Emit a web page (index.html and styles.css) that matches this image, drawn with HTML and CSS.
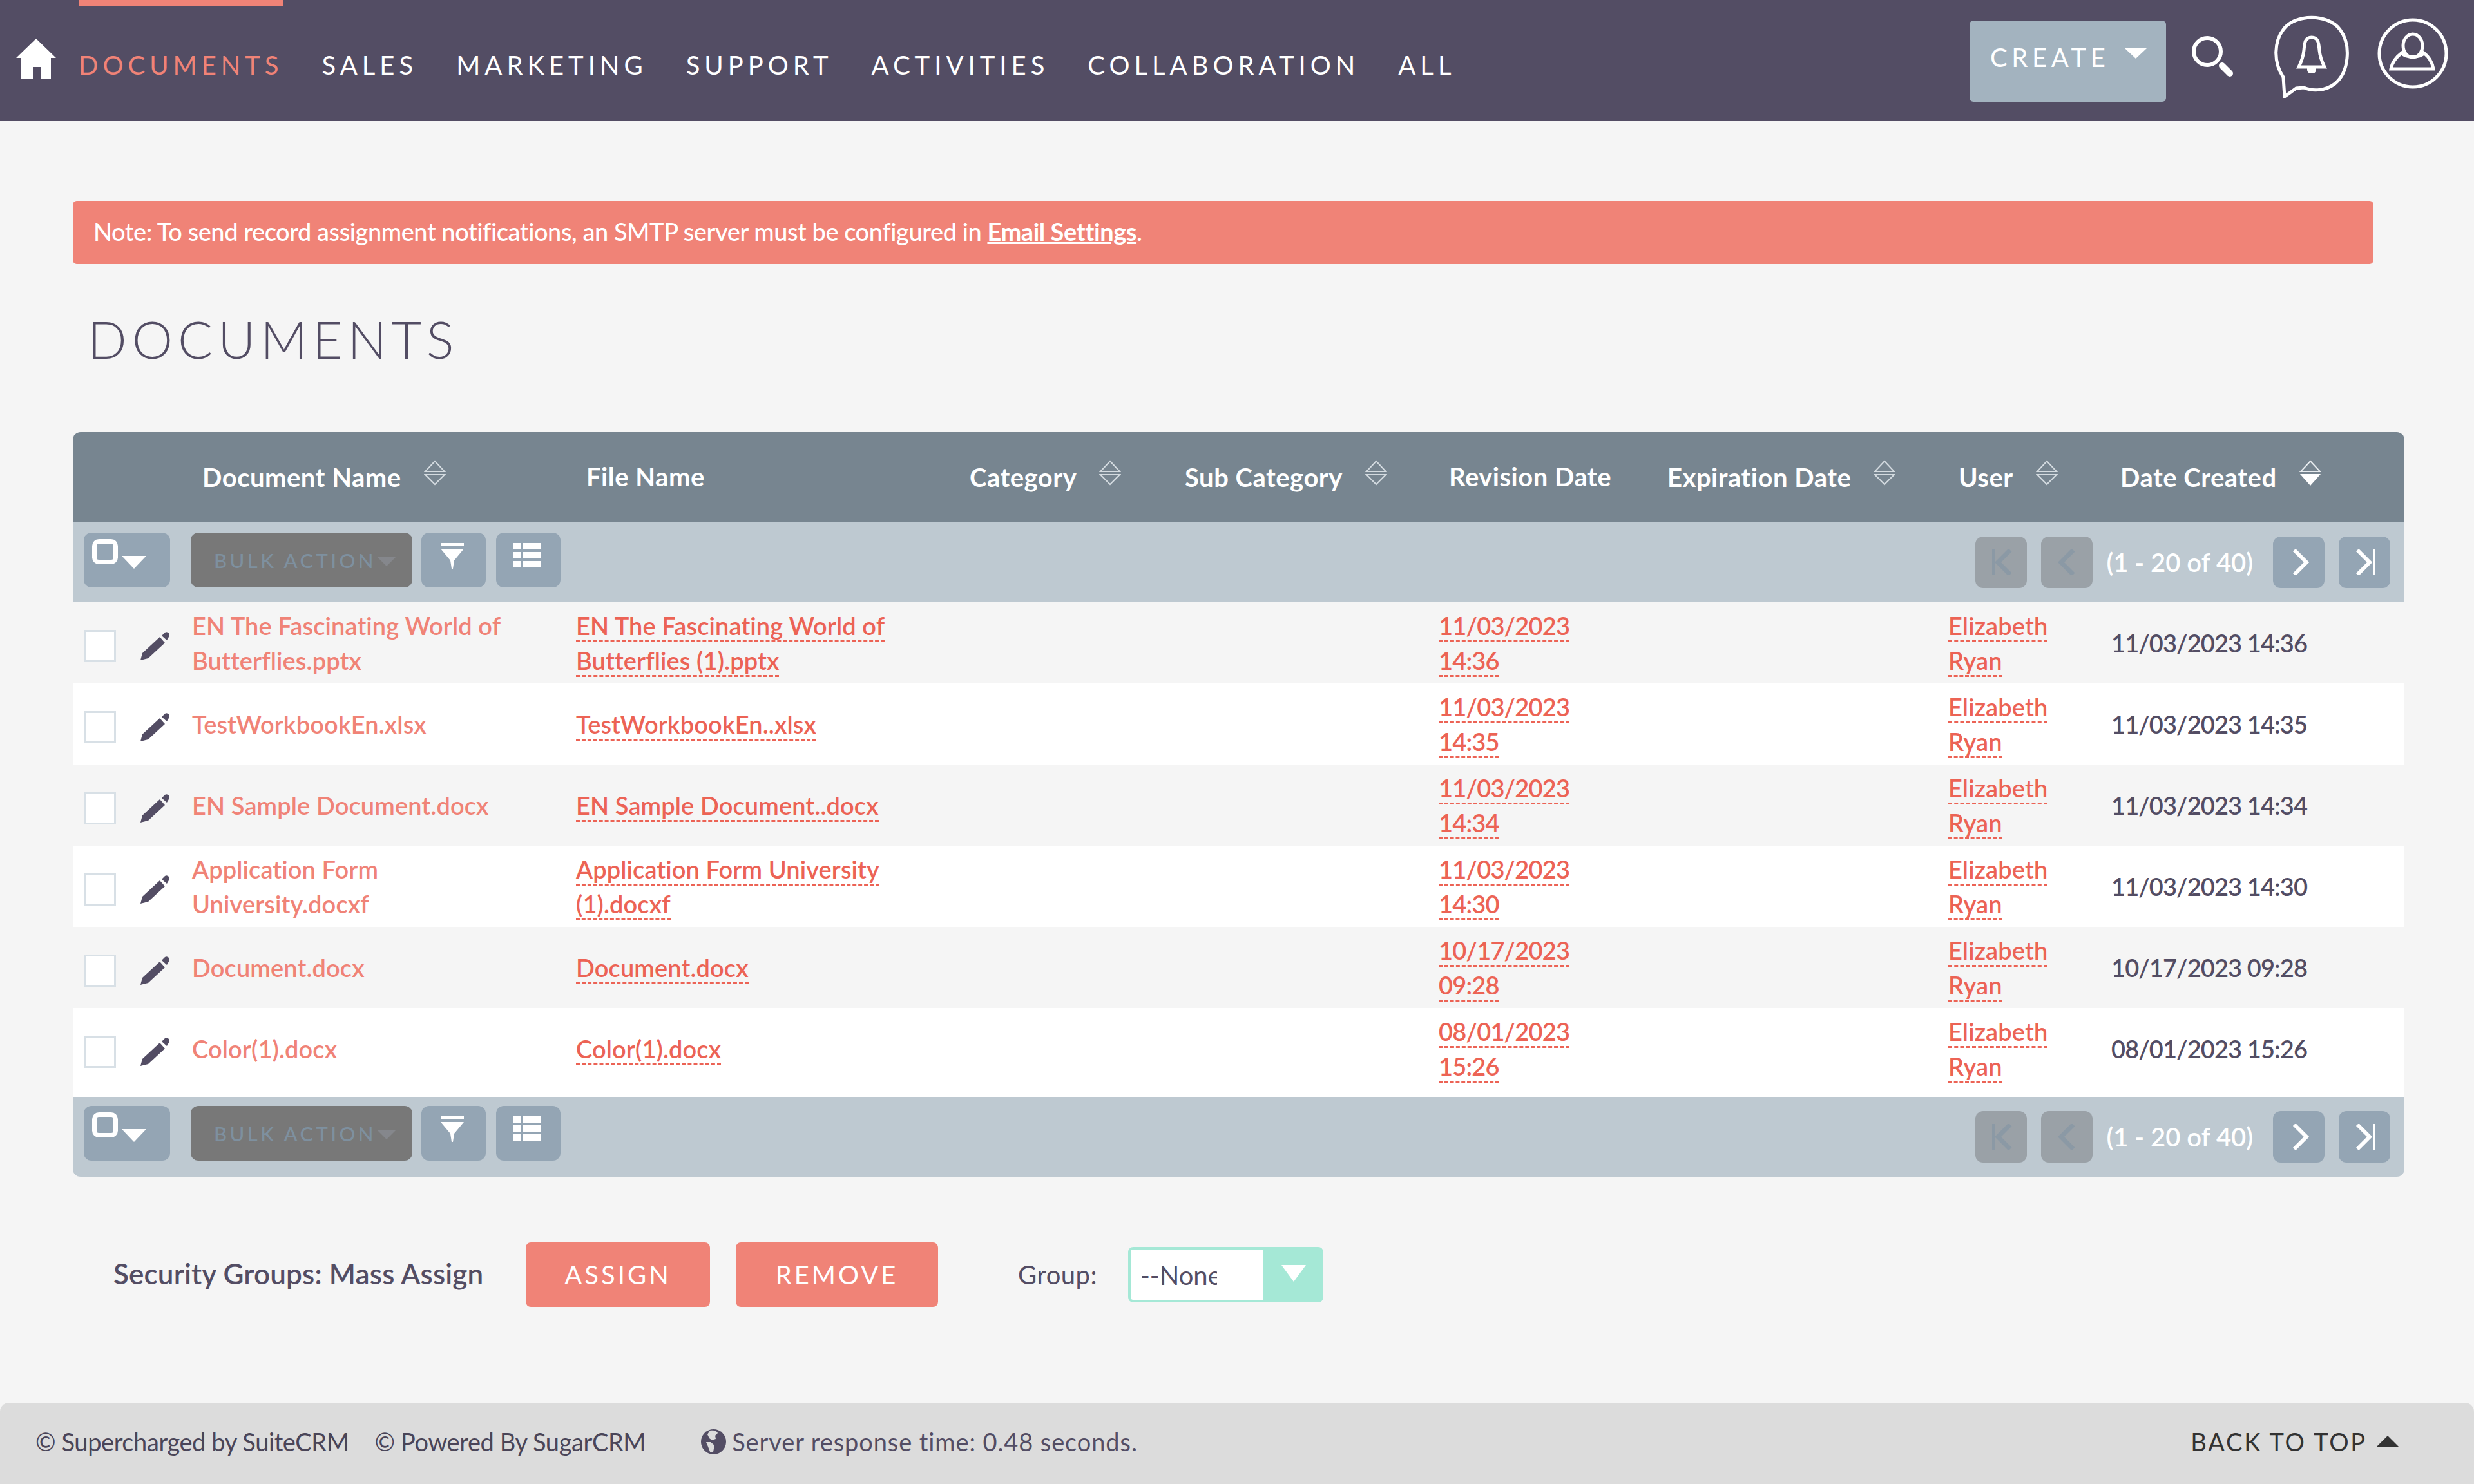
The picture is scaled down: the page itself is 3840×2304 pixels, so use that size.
FILE: index.html
```html
<!DOCTYPE html>
<html lang="en">
<head>
  <meta charset="UTF-8">
  <meta name="viewport" content="width=device-width, initial-scale=1.0">
  <title>Documents - SuiteCRM</title>
  <link rel="stylesheet" href="styles.css">
</head>
<body>
  <svg class="defs" width="0" height="0" aria-hidden="true">
    <symbol id="pencil" viewBox="0 0 45 44">
      <path d="M0 44 L3 33 L30 8 L38 17 L12 41 Z" fill="#534d64"/>
      <path d="M33 6 L38 1 Q41 -1 44 2 L45 6 L41 13 Z" fill="#534d64"/>
    </symbol>
    <symbol id="sort" viewBox="0 0 34 40">
      <path d="M17 2 L32 18 H2 Z M2 23 H32 L17 38 Z" fill="none" stroke="#d4dbe0" stroke-width="2"/>
    </symbol>
    <symbol id="sort-down" viewBox="0 0 34 40">
      <path d="M17 2 L32 18 H2 Z" fill="none" stroke="#e8ecef" stroke-width="2"/>
      <path d="M1 22 H33 L17 40 Z" fill="#fff"/>
    </symbol>
    <symbol id="select-all" viewBox="0 0 84 46">
      <rect x="3.5" y="3.5" width="33" height="32" rx="7" fill="none" stroke="#fff" stroke-width="7"/>
      <path d="M46 26 H84 L65 46 Z" fill="#fff"/>
    </symbol>
    <symbol id="filter" viewBox="0 0 36 40">
      <path d="M0 0 H36 V5 H0 Z M0 9 H36 L21 27 L19 40 H17 L15 27 Z" fill="#fff"/>
    </symbol>
    <symbol id="list" viewBox="0 0 42 38">
      <path d="M0 0 H12 V10 H0 Z M15 0 H42 V10 H15 Z M0 14 H12 V24 H0 Z M15 14 H42 V24 H15 Z M0 28 H12 V38 H0 Z M15 28 H42 V38 H15 Z" fill="#fff"/>
    </symbol>
    <symbol id="page-first" viewBox="0 0 40 40">
      <path d="M6 0 H10 V40 H6 Z" fill="#8b99a5"/>
      <path d="M34 1 L15 20 L34 39" fill="none" stroke="#8b99a5" stroke-width="7"/>
    </symbol>
    <symbol id="page-prev" viewBox="0 0 40 40">
      <path d="M30 1 L11 20 L30 39" fill="none" stroke="#8b99a5" stroke-width="7"/>
    </symbol>
    <symbol id="page-next" viewBox="0 0 40 40">
      <path d="M10 1 L29 20 L10 39" fill="none" stroke="#fff" stroke-width="6"/>
    </symbol>
    <symbol id="page-last" viewBox="0 0 40 40">
      <path d="M6 1 L25 20 L6 39" fill="none" stroke="#fff" stroke-width="6"/>
      <path d="M30 0 H34 V40 H30 Z" fill="#fff"/>
    </symbol>
  </svg>

  <header class="topbar">
    <a class="home" href="#">
      <svg width="62" height="62" viewBox="0 0 62 62"><path d="M31 0 L62 30 H54 V62 H39 V44 H26 V62 H8 V30 H0 Z" fill="#fff"/></svg>
    </a>
    <nav class="main-nav">
      <a class="active" href="#">DOCUMENTS</a>
      <a href="#">SALES</a>
      <a href="#">MARKETING</a>
      <a href="#">SUPPORT</a>
      <a href="#">ACTIVITIES</a>
      <a href="#">COLLABORATION</a>
      <a href="#">ALL</a>
    </nav>
    <div class="nav-tools">
      <button class="create-btn">CREATE<svg width="34" height="16" viewBox="0 0 34 16"><path d="M0 0 H34 L17 16 Z" fill="#fff"/></svg></button>
      <svg class="tool-search" width="66" height="64" viewBox="0 0 66 64">
        <circle cx="24" cy="24" r="21" fill="none" stroke="#fff" stroke-width="6"/>
        <path d="M47 46 L59 58" stroke="#fff" stroke-width="10" stroke-linecap="round"/>
      </svg>
      <svg class="tool-bell" width="116" height="128" viewBox="0 0 116 128">
        <path d="M14 96 C-2 72 0 40 14 22 C32 -3 84 -3 102 22 C120 46 116 88 94 106 C80 117 60 118 46 112 L34 113 L16 126 Z" fill="none" stroke="#fff" stroke-width="5"/>
        <path d="M58 34 C47 34 47 44 46 54 C45 64 42 72 38 80 H78 C74 72 71 64 70 54 C69 44 69 34 58 34 Z" fill="none" stroke="#fff" stroke-width="5"/>
        <path d="M51 80 H65 V84 C65 89 61 90 58 90 C55 90 51 89 51 84 Z" fill="#fff"/>
      </svg>
      <svg class="tool-user" width="110" height="110" viewBox="0 0 110 110">
        <circle cx="55" cy="55" r="52" fill="none" stroke="#fff" stroke-width="5"/>
        <ellipse cx="55" cy="43" rx="15" ry="18" fill="none" stroke="#fff" stroke-width="5"/>
        <path d="M38 54 C40 62 70 62 72 54 C80 60 85 68 87 79 H21 C23 68 30 60 38 54 Z" fill="none" stroke="#fff" stroke-width="5"/>
      </svg>
    </div>
  </header>

  <main>
    <div class="alert">Note: To send record assignment notifications, an SMTP server must be configured in <a href="#">Email Settings</a>.</div>
    <h1 class="page-title">DOCUMENTS</h1>

    <div class="list-wrap">
      <table class="list-table">
        <colgroup>
          <col class="c-check"><col class="c-edit"><col class="c-name"><col class="c-file"><col class="c-cat"><col class="c-sub"><col class="c-rev"><col class="c-exp"><col class="c-user"><col class="c-date">
        </colgroup>
        <thead>
          <tr>
            <th colspan="2"></th>
            <th>Document Name<svg class="sort"><use href="#sort"/></svg></th>
            <th>File Name</th>
            <th>Category<svg class="sort"><use href="#sort"/></svg></th>
            <th>Sub Category<svg class="sort"><use href="#sort"/></svg></th>
            <th>Revision Date</th>
            <th>Expiration Date<svg class="sort"><use href="#sort"/></svg></th>
            <th>User<svg class="sort"><use href="#sort"/></svg></th>
            <th>Date Created<svg class="sort"><use href="#sort-down"/></svg></th>
          </tr>
          <tr class="toolbar-row">
            <td colspan="10">
              <div class="toolbar">
                <button class="tb-btn tb-select"><svg width="84" height="46"><use href="#select-all"/></svg></button>
                <button class="tb-btn tb-bulk">BULK ACTION<svg width="28" height="14" viewBox="0 0 28 14"><path d="M0 0 H28 L14 14 Z" fill="#85878c"/></svg></button>
                <button class="tb-btn tb-icon"><svg width="36" height="40"><use href="#filter"/></svg></button>
                <button class="tb-btn tb-icon"><svg width="42" height="38"><use href="#list"/></svg></button>
                <div class="pager">
                  <button class="pg-btn off"><svg width="40" height="40"><use href="#page-first"/></svg></button>
                  <button class="pg-btn off"><svg width="40" height="40"><use href="#page-prev"/></svg></button>
                  <span class="pg-count">(1 - 20 of 40)</span>
                  <button class="pg-btn"><svg width="40" height="40"><use href="#page-next"/></svg></button>
                  <button class="pg-btn"><svg width="40" height="40"><use href="#page-last"/></svg></button>
                </div>
              </div>
            </td>
          </tr>
        </thead>
        <tbody>
          <tr>
            <td class="cell-check"><span class="checkbox"></span></td>
            <td class="cell-edit"><svg width="45" height="44"><use href="#pencil"/></svg></td>
            <td class="cell-name"><a class="name" href="#">EN The Fascinating World of Butterflies.pptx</a></td>
            <td><a class="link" href="#">EN The Fascinating World of Butterflies (1).pptx</a></td>
            <td></td><td></td>
            <td class="cell-rev"><a class="link" href="#">11/03/2023 14:36</a></td>
            <td></td>
            <td class="cell-user"><a class="link" href="#">Elizabeth Ryan</a></td>
            <td class="date">11/03/2023 14:36</td>
          </tr>
          <tr>
            <td class="cell-check"><span class="checkbox"></span></td>
            <td class="cell-edit"><svg width="45" height="44"><use href="#pencil"/></svg></td>
            <td class="cell-name"><a class="name" href="#">TestWorkbookEn.xlsx</a></td>
            <td><a class="link" href="#">TestWorkbookEn..xlsx</a></td>
            <td></td><td></td>
            <td class="cell-rev"><a class="link" href="#">11/03/2023 14:35</a></td>
            <td></td>
            <td class="cell-user"><a class="link" href="#">Elizabeth Ryan</a></td>
            <td class="date">11/03/2023 14:35</td>
          </tr>
          <tr>
            <td class="cell-check"><span class="checkbox"></span></td>
            <td class="cell-edit"><svg width="45" height="44"><use href="#pencil"/></svg></td>
            <td class="cell-name"><a class="name" href="#">EN Sample Document.docx</a></td>
            <td><a class="link" href="#">EN Sample Document..docx</a></td>
            <td></td><td></td>
            <td class="cell-rev"><a class="link" href="#">11/03/2023 14:34</a></td>
            <td></td>
            <td class="cell-user"><a class="link" href="#">Elizabeth Ryan</a></td>
            <td class="date">11/03/2023 14:34</td>
          </tr>
          <tr>
            <td class="cell-check"><span class="checkbox"></span></td>
            <td class="cell-edit"><svg width="45" height="44"><use href="#pencil"/></svg></td>
            <td class="cell-name"><a class="name" href="#">Application Form University.docxf</a></td>
            <td><a class="link" href="#">Application Form University (1).docxf</a></td>
            <td></td><td></td>
            <td class="cell-rev"><a class="link" href="#">11/03/2023 14:30</a></td>
            <td></td>
            <td class="cell-user"><a class="link" href="#">Elizabeth Ryan</a></td>
            <td class="date">11/03/2023 14:30</td>
          </tr>
          <tr>
            <td class="cell-check"><span class="checkbox"></span></td>
            <td class="cell-edit"><svg width="45" height="44"><use href="#pencil"/></svg></td>
            <td class="cell-name"><a class="name" href="#">Document.docx</a></td>
            <td><a class="link" href="#">Document.docx</a></td>
            <td></td><td></td>
            <td class="cell-rev"><a class="link" href="#">10/17/2023 09:28</a></td>
            <td></td>
            <td class="cell-user"><a class="link" href="#">Elizabeth Ryan</a></td>
            <td class="date">10/17/2023 09:28</td>
          </tr>
          <tr class="last-row">
            <td class="cell-check"><span class="checkbox"></span></td>
            <td class="cell-edit"><svg width="45" height="44"><use href="#pencil"/></svg></td>
            <td class="cell-name"><a class="name" href="#">Color(1).docx</a></td>
            <td><a class="link" href="#">Color(1).docx</a></td>
            <td></td><td></td>
            <td class="cell-rev"><a class="link" href="#">08/01/2023 15:26</a></td>
            <td></td>
            <td class="cell-user"><a class="link" href="#">Elizabeth Ryan</a></td>
            <td class="date">08/01/2023 15:26</td>
          </tr>
        </tbody>
        <tfoot>
          <tr class="toolbar-row">
            <td colspan="10">
              <div class="toolbar toolbar-bottom">
                <button class="tb-btn tb-select"><svg width="84" height="46"><use href="#select-all"/></svg></button>
                <button class="tb-btn tb-bulk">BULK ACTION<svg width="28" height="14" viewBox="0 0 28 14"><path d="M0 0 H28 L14 14 Z" fill="#85878c"/></svg></button>
                <button class="tb-btn tb-icon"><svg width="36" height="40"><use href="#filter"/></svg></button>
                <button class="tb-btn tb-icon"><svg width="42" height="38"><use href="#list"/></svg></button>
                <div class="pager">
                  <button class="pg-btn off"><svg width="40" height="40"><use href="#page-first"/></svg></button>
                  <button class="pg-btn off"><svg width="40" height="40"><use href="#page-prev"/></svg></button>
                  <span class="pg-count">(1 - 20 of 40)</span>
                  <button class="pg-btn"><svg width="40" height="40"><use href="#page-next"/></svg></button>
                  <button class="pg-btn"><svg width="40" height="40"><use href="#page-last"/></svg></button>
                </div>
              </div>
            </td>
          </tr>
        </tfoot>
      </table>
    </div>

    <div class="mass-assign">
      <span class="mass-title">Security Groups: Mass Assign</span>
      <button class="btn-red btn-assign">ASSIGN</button>
      <button class="btn-red btn-remove">REMOVE</button>
      <label class="group-label">Group:</label>
      <div class="group-select">
        <span class="group-value">--None--</span>
        <span class="group-arrow"><svg width="38" height="26" viewBox="0 0 38 26"><path d="M0 0 H38 L19 26 Z" fill="#fff"/></svg></span>
      </div>
    </div>
  </main>

  <footer class="page-footer">
    <span class="foot-item">&copy; Supercharged by SuiteCRM</span>
    <span class="foot-item foot-powered">&copy; Powered By SugarCRM</span>
    <svg class="globe" width="39" height="39" viewBox="0 0 39 39">
      <circle cx="19.5" cy="19.5" r="19.5" fill="#534d64"/>
      <path d="M14 2 C20 1 25 3 26 6 L22 10 L23 15 L17 17 L13 14 L10 8 Z M8 20 L15 20 L21 25 L19 35 L14 35 L11 27 Z" fill="#dcdcdc"/>
    </svg>
    <span class="foot-time">Server response time: 0.48 seconds.</span>
    <a class="back-top" href="#">BACK TO TOP<svg width="36" height="18" viewBox="0 0 36 18"><path d="M18 0 L36 18 H0 Z" fill="#333"/></svg></a>
  </footer>
</body>
</html>
```

FILE: styles.css
```css
body {
  font-family: Lato, "Open Sans", sans-serif;
  font-size: 38px;
  background: #f5f5f5;
  color: #534d64;
  margin: 0;
  padding: 0;
  min-height: 2304px;
  display: flex;
  flex-direction: column;
}
a {
  text-decoration: none;
}
button {
  font-family: inherit;
  border: none;
  padding: 0;
}
.defs {
  position: absolute;
}

/* top bar */
.topbar {
  background: #534d64;
  height: 188px;
  display: flex;
  align-items: flex-start;
  padding: 0 40px 0 25px;
}
.home {
  margin: 60px 35px 0 0;
  display: block;
  height: 62px;
}
.main-nav {
  display: flex;
  gap: 60px;
}
.main-nav a {
  border-top: 9px solid transparent;
  padding-top: 72px;
  line-height: 40px;
  font-size: 40px;
  letter-spacing: 7px;
  color: #fff;
}
.main-nav a.active {
  color: #f08377;
  border-top-color: #f08377;
}
.nav-tools {
  margin-left: auto;
  display: flex;
  align-items: flex-start;
}
.create-btn {
  width: 305px;
  height: 126px;
  margin-top: 32px;
  background: #a3b3bf;
  border-radius: 6px;
  color: #fff;
  font-size: 40px;
  letter-spacing: 6.6px;
  display: flex;
  align-items: flex-start;
  padding: 33px 0 0 32px;
}
.create-btn svg {
  margin: 10px 0 0 24px;
}
.tool-search {
  margin: 56px 0 0 40px;
}
.tool-bell {
  margin: 24px 0 0 62px;
}
.tool-user {
  margin: 28px 0 0 44px;
}

/* alert + title */
.alert {
  margin: 124px 156px 0 113px;
  height: 98px;
  line-height: 94px;
  padding-left: 32px;
  background: #f08377;
  border-radius: 6px;
  color: #fff;
  font-size: 38px;
  font-weight: 500;
  letter-spacing: -0.45px;
}
.alert a {
  color: #fff;
  font-weight: bold;
  text-decoration: underline;
}
.page-title {
  margin: 64px 0 93px 136px;
  height: 104px;
  line-height: 104px;
  font-size: 80px;
  font-weight: 300;
  letter-spacing: 8px;
}

/* list table */
.list-wrap {
  margin: 0 108px 0 113px;
  border-radius: 12px;
  overflow: hidden;
}
.list-table {
  width: 100%;
  table-layout: fixed;
  border-collapse: collapse;
}
.c-check { width: 88px; }
.c-edit { width: 97px; }
.c-name { width: 596px; }
.c-file { width: 595px; }
.c-cat { width: 334px; }
.c-sub { width: 410px; }
.c-rev { width: 339px; }
.c-exp { width: 452px; }
.c-user { width: 251px; }
.c-date { width: 457px; }

.list-table th {
  background: #778590;
  height: 140px;
  box-sizing: border-box;
  padding: 0 0 3px 16px;
  text-align: left;
  color: #fff;
  font-size: 40px;
  font-weight: bold;
  letter-spacing: 0.5px;
  white-space: nowrap;
}
.sort {
  width: 34px;
  height: 40px;
  margin-left: 35px;
  vertical-align: 2px;
}
.toolbar-row td {
  background: #bec9d1;
  height: 124px;
  padding: 0;
}
.toolbar {
  height: 124px;
  box-sizing: border-box;
  display: flex;
  align-items: flex-start;
  padding: 16px 22px 0 17px;
}
.toolbar-bottom {
  padding-top: 14px;
}
.toolbar-bottom .pager {
  margin-top: 8px;
}
.tb-btn {
  height: 85px;
  background: #94a5b4;
  border-radius: 12px;
  color: #fff;
  display: flex;
  align-items: flex-start;
  justify-content: center;
}
.tb-select {
  width: 134px;
  padding: 10px 0 0 13px;
  justify-content: flex-start;
}
.tb-bulk {
  width: 344px;
  margin: 0 14px 0 32px;
  background: #787878;
  color: #7e909f;
  font-size: 31px;
  letter-spacing: 4.4px;
  font-weight: 500;
  align-items: center;
  justify-content: flex-start;
  padding-left: 36px;
}
.tb-bulk svg {
  margin: 4px 0 0 2px;
}
.tb-icon {
  width: 100px;
  padding: 16px 5px 0 0;
}
.tb-icon + .tb-icon {
  margin-left: 16px;
}
.pager {
  margin: 6px 0 0 auto;
  display: flex;
  align-items: flex-start;
}
.pg-btn {
  width: 80px;
  height: 80px;
  background: #94a5b4;
  border-radius: 12px;
  display: flex;
  align-items: center;
  justify-content: center;
  padding-left: 6px;
}
.pg-btn + .pg-btn {
  margin-left: 22px;
}
.pg-btn.off {
  background: #9aa1a7;
  padding-left: 0;
}
.pg-count {
  margin: 0 31px 0 22px;
  line-height: 80px;
  color: #fff;
  font-size: 40px;
  font-weight: 600;
  white-space: nowrap;
  letter-spacing: -0.05px;
}

.list-table tbody tr {
  background: #f5f5f5;
}
.list-table tbody tr:nth-child(even) {
  background: #fff;
}
.list-table tbody td {
  height: 126px;
  box-sizing: border-box;
  padding: 0 16px 0 0;
  line-height: 54px;
  vertical-align: middle;
  font-size: 38px;
  font-weight: 600;
  letter-spacing: 0.1px;
}
.list-table tbody .last-row td {
  height: 138px;
  padding-bottom: 12px;
}
.list-table tbody .cell-check,
.list-table tbody .cell-edit {
  padding-top: 10px;
  padding-left: 17px;
}
.list-table tbody .last-row .cell-check,
.list-table tbody .last-row .cell-edit {
  padding-top: 10px;
  padding-bottom: 12px;
}
.cell-edit svg {
  display: block;
}
.checkbox {
  display: block;
  width: 50px;
  height: 50px;
  box-sizing: border-box;
  background: #fff;
  border: 3px solid #d8e0e6;
}
.name {
  color: #f08377;
}
.link {
  color: #ec6355;
  border-bottom: 3px dashed #ec6355;
}
.list-table tbody .cell-name {
  padding-right: 40px;
}
.list-table tbody .cell-rev {
  padding-right: 40px;
  letter-spacing: -0.8px;
}
.list-table tbody .cell-user {
  padding-right: 30px;
}
.list-table tbody .date {
  white-space: nowrap;
  padding-left: 2px;
  letter-spacing: -0.9px;
}

/* mass assign */
.mass-assign {
  margin-top: 102px;
  padding-left: 176px;
  display: flex;
  align-items: center;
  height: 100px;
}
.mass-title {
  font-size: 44px;
  font-weight: 600;
  letter-spacing: 0.15px;
  width: 640px;
  white-space: nowrap;
  padding-bottom: 4px;
}
.btn-red {
  height: 100px;
  background: #f08377;
  border-radius: 8px;
  color: #fff;
  font-size: 40px;
  letter-spacing: 4px;
}
.btn-assign {
  width: 286px;
}
.btn-remove {
  width: 314px;
  margin-left: 40px;
}
.group-label {
  margin-left: 124px;
  width: 171px;
  font-size: 40px;
  letter-spacing: 0.5px;
}
.group-select {
  width: 303px;
  height: 86px;
  box-sizing: border-box;
  display: flex;
  background: #fff;
  border: 4px solid #a5e8d6;
  border-radius: 8px;
}
.group-value {
  width: 119px;
  margin-left: 15px;
  overflow: hidden;
  white-space: nowrap;
  line-height: 80px;
  font-size: 40px;
  color: #534d64;
}
.group-arrow {
  margin-left: auto;
  width: 90px;
  background: #a5e8d6;
  display: flex;
  justify-content: center;
  padding: 24px 0 0 5px;
  box-sizing: border-box;
}
.group-arrow svg {
  display: block;
}

/* footer */
.page-footer {
  margin-top: auto;
  height: 126px;
  box-sizing: border-box;
  background: #dcdcdc;
  border-radius: 14px 14px 0 0;
  display: flex;
  align-items: center;
  padding: 0 116px 6px 55px;
  font-size: 38px;
}
.foot-item {
  color: #4a4558;
  letter-spacing: -0.4px;
}
.foot-powered {
  margin-left: 40px;
}
.globe {
  margin-left: 86px;
}
.foot-time {
  margin-left: 9px;
  letter-spacing: 0.9px;
}
.back-top {
  margin-left: auto;
  color: #333;
  font-size: 38px;
  letter-spacing: 2.8px;
  display: flex;
  align-items: center;
}
.back-top svg {
  margin-left: 14px;
}
```
